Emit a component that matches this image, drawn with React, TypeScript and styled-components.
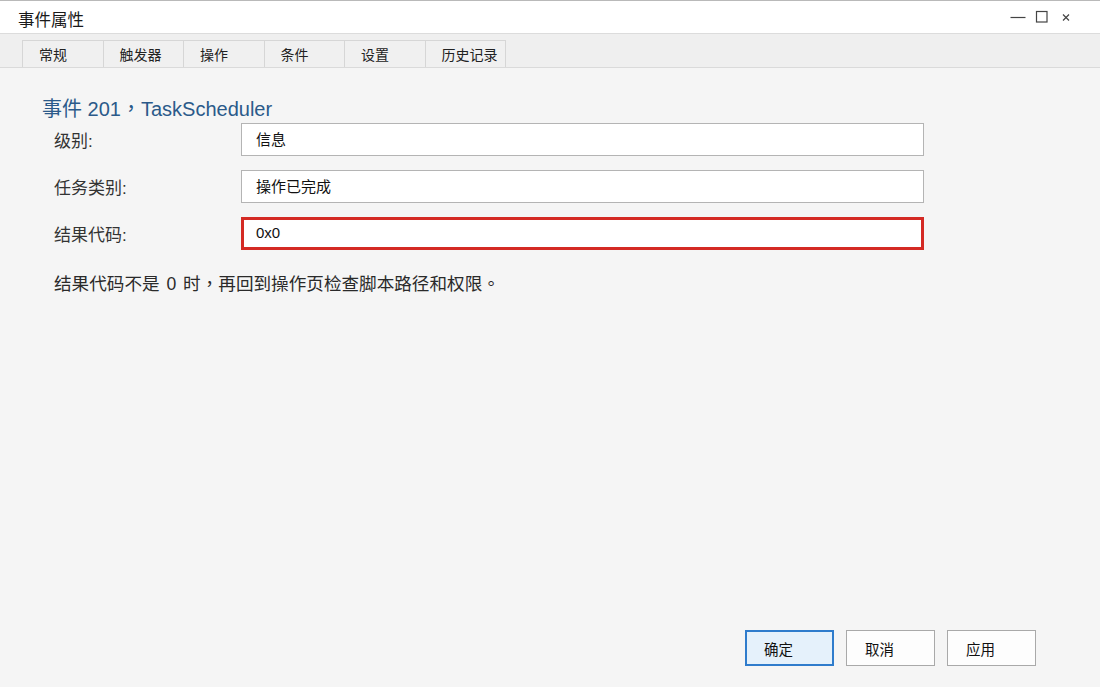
import styled, { createGlobalStyle } from 'styled-components';

const GlobalStyle = createGlobalStyle`
    html, body {
        margin: 0;
        padding: 0;
        background: #f5f5f5;
    }
    body {
        font-family: 'Liberation Sans', 'Noto Sans CJK SC', 'Noto Sans', sans-serif;
        color: #222;
    }
`;

// centred full-width punctuation, as in the reference
const punctFont = `'Liberation Sans', 'Noto Sans CJK TC', 'Noto Sans', sans-serif`;

const Window = styled.div`
    width: 1100px;
    height: 687px;
    box-sizing: border-box;
    border-top: 1px solid #b9b9b9;
    display: flex;
    flex-direction: column;
    background: #f5f5f5;
    overflow: hidden;
`;

const TitleBar = styled.div`
    height: 33px;
    box-sizing: border-box;
    flex-shrink: 0;
    background: #ffffff;
    border-bottom: 1px solid #dcdcdc;
    display: flex;
    align-items: center;
    justify-content: space-between;
    padding: 3px 26px 0 18px;
`;

const Title = styled.div`
    font-size: 16.5px;
    color: #1a1a1a;
`;

const Controls = styled.div`
    display: flex;
    align-items: center;
    gap: 8px;
    margin-top: -3px;
`;

const ControlBtn = styled.div`
    width: 16px;
    height: 16px;
    display: flex;
    align-items: center;
    justify-content: center;
`;

const TabBar = styled.div`
    height: 33px;
    flex-shrink: 0;
    background: #efefef;
    border-bottom: 1px solid #dadada;
    display: flex;
    align-items: flex-end;
    padding-left: 22px;
`;

const Tab = styled.div`
    width: 81.5px;
    height: 27px;
    box-sizing: border-box;
    border: 1px solid #d6d6d6;
    border-bottom: none;
    margin-right: -1px;
    display: flex;
    align-items: center;
    padding-left: 16px;
    font-size: 14px;
    color: #222;
    background: #f0f0f0;
`;

const Content = styled.div`
    flex: 1;
    display: flex;
    flex-direction: column;
    padding: 27px 0 0 42px;
`;

const Heading = styled.div`
    font-family: ${punctFont};
    font-size: 20px;
    color: #2b5a8a;
    line-height: 28px;
`;

const Form = styled.div`
    display: flex;
    flex-direction: column;
    gap: 14px;
    padding-left: 12px;
`;

const Row = styled.div`
    display: flex;
    align-items: center;
`;

const Label = styled.div`
    width: 187px;
    font-size: 17px;
    color: #333;
`;

const Field = styled.div<{ $error?: boolean }>`
    width: 683px;
    height: 33px;
    box-sizing: border-box;
    background: #ffffff;
    border: ${(p) => (p.$error ? '3px solid #d42a24' : '1px solid #b4b4b4')};
    display: flex;
    align-items: center;
    padding-left: ${(p) => (p.$error ? '12px' : '14px')};
    padding-bottom: 2px;
    font-size: 15px;
    color: #111;
`;

const Note = styled.div`
    font-family: ${punctFont};
    margin-top: 20px;
    padding-left: 12px;
    font-size: 17.6px;
    word-spacing: 2px;
    color: #2a2a2a;
`;

const Footer = styled.div`
    margin-top: auto;
    display: flex;
    justify-content: flex-end;
    gap: 12px;
    padding: 0 64px 21px 0;
`;

const Button = styled.div<{ $primary?: boolean }>`
    width: 89px;
    height: 36px;
    box-sizing: border-box;
    border: ${(p) => (p.$primary ? '2px solid #2f7ccc' : '1px solid #a9a9a9')};
    background: ${(p) => (p.$primary ? '#e5f1fb' : '#fdfdfd')};
    display: flex;
    align-items: center;
    padding-left: ${(p) => (p.$primary ? '17px' : '18px')};
    font-size: 14.5px;
    color: #111;
`;

const tabs = ['常规', '触发器', '操作', '条件', '设置', '历史记录'];

const fields = [
    { label: '级别:', value: '信息' },
    { label: '任务类别:', value: '操作已完成' },
    { label: '结果代码:', value: '0x0', error: true },
];

export default function App() {
    return (
        <>
            <GlobalStyle />
            <Window>
                <TitleBar>
                    <Title>事件属性</Title>
                    <Controls>
                        <ControlBtn>
                            <svg width="16" height="16" viewBox="0 0 16 16">
                                <line x1="0.5" y1="8.5" x2="15.5" y2="8.5" stroke="#444" strokeWidth="1.2" />
                            </svg>
                        </ControlBtn>
                        <ControlBtn>
                            <svg width="16" height="16" viewBox="0 0 16 16">
                                <rect x="2.5" y="2.5" width="10.5" height="10.5" fill="none" stroke="#444" strokeWidth="1.2" />
                            </svg>
                        </ControlBtn>
                        <ControlBtn>
                            <svg width="16" height="16" viewBox="0 0 16 16">
                                <path d="M5 5.5 L11 11.5 M11 5.5 L5 11.5" stroke="#444" strokeWidth="1.2" />
                            </svg>
                        </ControlBtn>
                    </Controls>
                </TitleBar>
                <TabBar>
                    {tabs.map((t) => (
                        <Tab key={t}>{t}</Tab>
                    ))}
                </TabBar>
                <Content>
                    <Heading>事件 201，TaskScheduler</Heading>
                    <Form>
                        {fields.map((f) => (
                            <Row key={f.label}>
                                <Label>{f.label}</Label>
                                <Field $error={f.error}>{f.value}</Field>
                            </Row>
                        ))}
                    </Form>
                    <Note>结果代码不是 0 时，再回到操作页检查脚本路径和权限。</Note>
                    <Footer>
                        <Button $primary>确定</Button>
                        <Button>取消</Button>
                        <Button>应用</Button>
                    </Footer>
                </Content>
            </Window>
        </>
    );
}
